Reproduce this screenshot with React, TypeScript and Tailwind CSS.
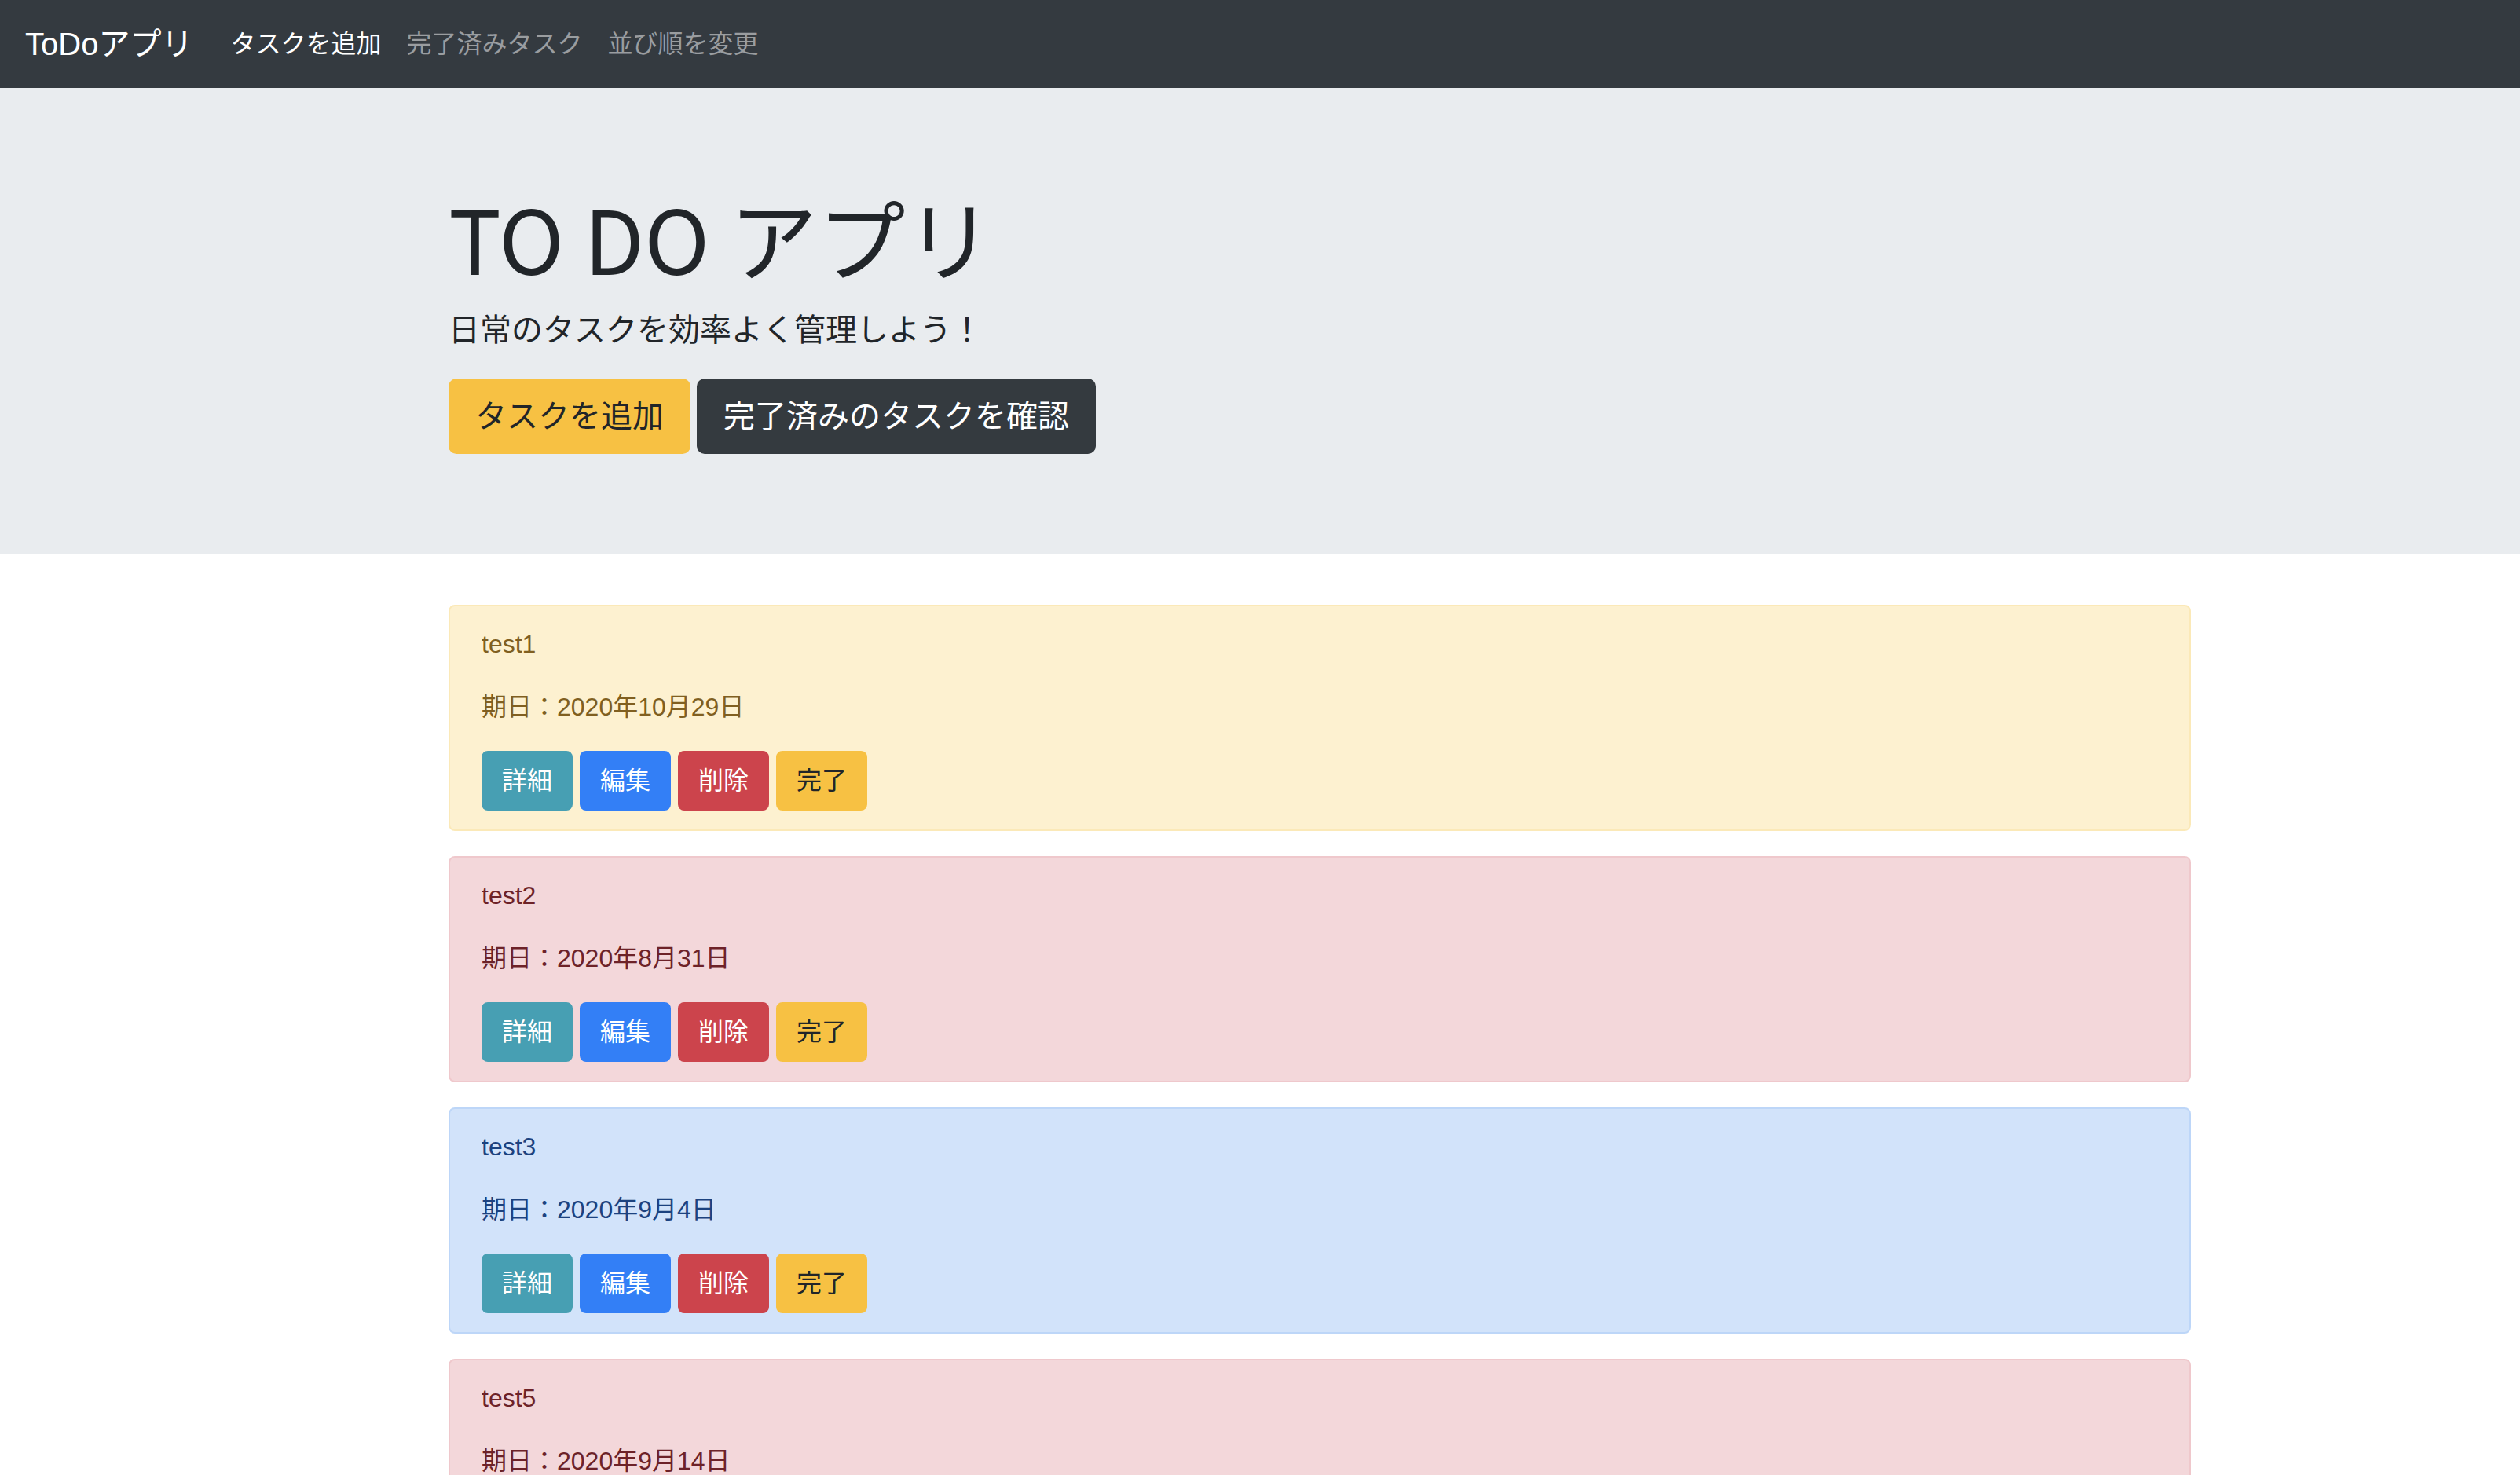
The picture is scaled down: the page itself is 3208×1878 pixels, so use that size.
const font = "font-['Liberation_Sans','Noto_Sans_CJK_JP',sans-serif]";

const tasks = [
  { title: "test1", due: "2020年10月29日", tone: "warning" },
  { title: "test2", due: "2020年8月31日", tone: "danger" },
  { title: "test3", due: "2020年9月4日", tone: "primary" },
  { title: "test5", due: "2020年9月14日", tone: "danger" },
];

const tones: Record<string, string> = {
  warning: "bg-[#fdf1d0] border-[#fbe9b8] text-[#805f20]",
  danger: "bg-[#f3d7da] border-[#efc8cc] text-[#6d2228]",
  primary: "bg-[#d2e3fa] border-[#bdd6f8] text-[#1c427f]",
};

function SmallButton({ label, className }: { label: string; className: string }) {
  return (
    <button className={`px-[24px] py-[12px] text-[32px] leading-[48px] rounded-[8px] border-2 ${className}`}>
      {label}
    </button>
  );
}

export default function App() {
  return (
    <div className={`${font} min-h-screen bg-white text-[#212529]`}>
      {/* navbar */}
      <nav className="h-[112px] bg-[#343a40] px-[32px] flex items-center">
        <span className="text-[40px] leading-[60px] text-white mr-[32px]">ToDoアプリ</span>
        <a className="px-[16px] text-[32px] leading-[48px] text-white">タスクを追加</a>
        <a className="px-[16px] text-[32px] leading-[48px] text-[#9a9da0]">完了済みタスク</a>
        <a className="px-[16px] text-[32px] leading-[48px] text-[#9a9da0]">並び順を変更</a>
      </nav>

      {/* jumbotron */}
      <header className="bg-[#e9ecef] py-[128px] mb-[64px] pl-[571px]">
        <h1 className="font-['Noto_Sans_CJK_JP','Liberation_Sans',sans-serif] text-[112px] leading-[134px] font-normal mb-[16px] -mt-[6px] pb-[6px]">
          TO DO アプリ
        </h1>
        <p className="text-[40px] leading-[60px] mb-[32px]">日常のタスクを効率よく管理しよう！</p>
        <div className="flex gap-[8px]">
          <button className="px-[32px] py-[16px] text-[40px] leading-[60px] rounded-[10px] border-2 border-[#f7c143] bg-[#f7c143] text-[#212529]">
            タスクを追加
          </button>
          <button className="px-[32px] py-[16px] text-[40px] leading-[60px] rounded-[10px] border-2 border-[#343a3f] bg-[#343a3f] text-white">
            完了済みのタスクを確認
          </button>
        </div>
      </header>

      {/* task list */}
      <main className="pl-[571px]">
        <div className="w-[2218px] flex flex-col gap-[32px]">
          {tasks.map((task, i) => (
            <div key={i} className={`border-2 rounded-[8px] px-[40px] py-[24px] ${tones[task.tone]}`}>
              <p className="text-[32px] leading-[48px] mb-[32px]">{task.title}</p>
              <p className="text-[32px] leading-[48px] mb-[32px]">期日：{task.due}</p>
              <div className="flex gap-[9px]">
                <SmallButton label="詳細" className="bg-[#479fb3] border-[#479fb3] text-white" />
                <SmallButton label="編集" className="bg-[#337ff6] border-[#337ff6] text-white" />
                <SmallButton label="削除" className="bg-[#cc444c] border-[#cc444c] text-white" />
                <SmallButton label="完了" className="bg-[#f7c143] border-[#f7c143] text-[#212529]" />
              </div>
            </div>
          ))}
        </div>
      </main>
    </div>
  );
}
